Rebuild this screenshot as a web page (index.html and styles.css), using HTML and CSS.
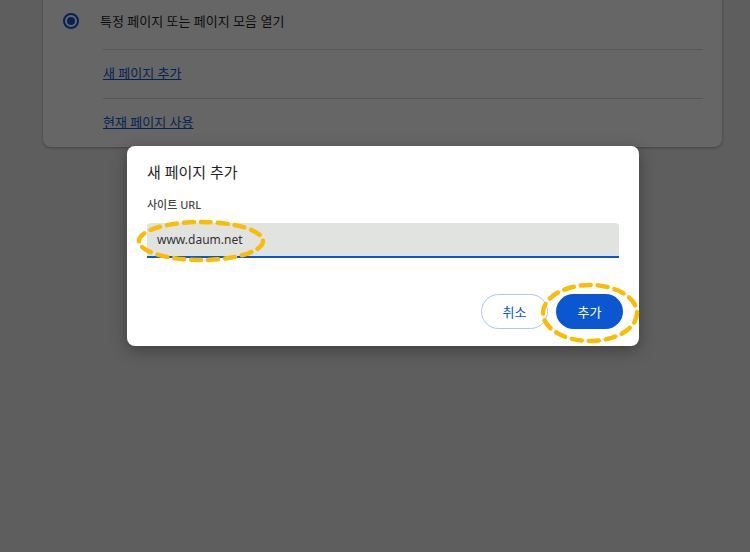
FILE: index.html
```html
<!DOCTYPE html>
<html lang="ko">
<head>
<meta charset="utf-8">
<link rel="stylesheet" href="styles.css">
</head>
<body>
<div class="page">
  <section class="card">
    <div class="row row-first">
      <span class="radio"><span class="radio-dot"></span></span>
      <span class="row-label">특정 페이지 또는 페이지 모음 열기</span>
    </div>
    <div class="sub">
      <div class="sub-row"><a class="link">새 페이지 추가</a></div>
      <div class="sub-row"><a class="link">현재 페이지 사용</a></div>
    </div>
  </section>
</div>
<div class="scrim"></div>
<div class="dialog">
  <h2 class="title">새 페이지 추가</h2>
  <label class="field-label">사이트 URL</label>
  <div class="input">www.daum.net</div>
  <div class="actions">
    <button class="btn btn-cancel">취소</button>
    <button class="btn btn-add">추가</button>
  </div>
  <svg class="mark mark-input" width="128" height="42" viewBox="0 0 128 42"><ellipse cx="64" cy="21" rx="62" ry="19"/></svg>
  <svg class="mark mark-add" width="98" height="60" viewBox="0 0 98 60"><ellipse cx="49" cy="30" rx="47" ry="28"/></svg>
</div>
</body>
</html>
```
FILE: styles.css
```css
html, body {
  margin: 0;
  padding: 0;
}
body {
  width: 750px;
  height: 552px;
  overflow: hidden;
  background: #eaeaea;
  font-family: "Noto Sans", "Noto Sans CJK KR", sans-serif;
  color: #1f1f1f;
  position: relative;
}
.page {
  padding: 0 28px 0 43px;
}
.card {
  margin-top: -8px;
  background: #ffffff;
  border-radius: 0 0 8px 8px;
  box-shadow: 0 1px 3px rgba(0,0,0,0.3);
  padding: 0 19px 0 20px;
}
.row {
  display: flex;
  align-items: center;
  height: 57px;
}
.radio {
  width: 12px;
  height: 12px;
  border: 2px solid #0b57d0;
  border-radius: 50%;
  display: flex;
  align-items: center;
  justify-content: center;
  margin-right: 21px;
}
.radio-dot {
  width: 8px;
  height: 8px;
  border-radius: 50%;
  background: #0b57d0;
}
.row-label {
  font-size: 13px;
}
.sub {
  margin-left: 40px;
}
.sub-row {
  height: 48px;
  box-sizing: content-box;
  border-top: 1px solid #d8d8d8;
  display: flex;
  align-items: center;
}
.sub-row .link {
  margin-bottom: 4px;
}
.link {
  color: #0b57d0;
  text-decoration: underline;
  font-size: 13px;
}
.scrim {
  position: absolute;
  inset: 0;
  background: rgba(0,0,0,0.6);
}
.dialog {
  position: absolute;
  left: 127px;
  top: 146px;
  width: 512px;
  height: 200px;
  box-sizing: border-box;
  background: #ffffff;
  border-radius: 8px;
  box-shadow: 0 4px 16px rgba(0,0,0,0.35);
  padding: 15px 20px 0 20px;
  display: flex;
  flex-direction: column;
}
.title {
  margin: 0;
  font-size: 15px;
  font-weight: 400;
  line-height: 22px;
  color: #1f1f1f;
}
.field-label {
  margin-top: 15px;
  font-size: 11px;
  font-weight: 500;
  line-height: 14px;
  color: #474747;
}
.input {
  margin-top: 11px;
  height: 33px;
  background: #e1e3e1;
  border-radius: 4px 4px 0 0;
  border-bottom: 2px solid #0b57d0;
  padding-left: 10px;
  display: flex;
  align-items: center;
  font-size: 12px;
  color: #333;
}
.actions {
  margin-top: 36px;
  display: flex;
  justify-content: flex-end;
  gap: 8px;
  margin-right: -4px;
}
.btn {
  width: 67px;
  height: 35px;
  border-radius: 18px;
  font-family: "Noto Sans CJK KR", sans-serif;
  font-size: 13px;
  cursor: pointer;
}
.btn-cancel {
  background: #ffffff;
  border: 1px solid #a8c7fa;
  color: #0b57d0;
}
.btn-add {
  background: #0b57d0;
  border: none;
  color: #ffffff;
}
.mark {
  position: absolute;
  overflow: visible;
}
.mark ellipse {
  fill: none;
  stroke: #fbbc04;
  stroke-width: 4.5;
  stroke-dasharray: 10 7;
  stroke-linecap: round;
}
.mark-input {
  left: 10px;
  top: 74px;
}
.mark-add {
  left: 414px;
  top: 137px;
}
```
